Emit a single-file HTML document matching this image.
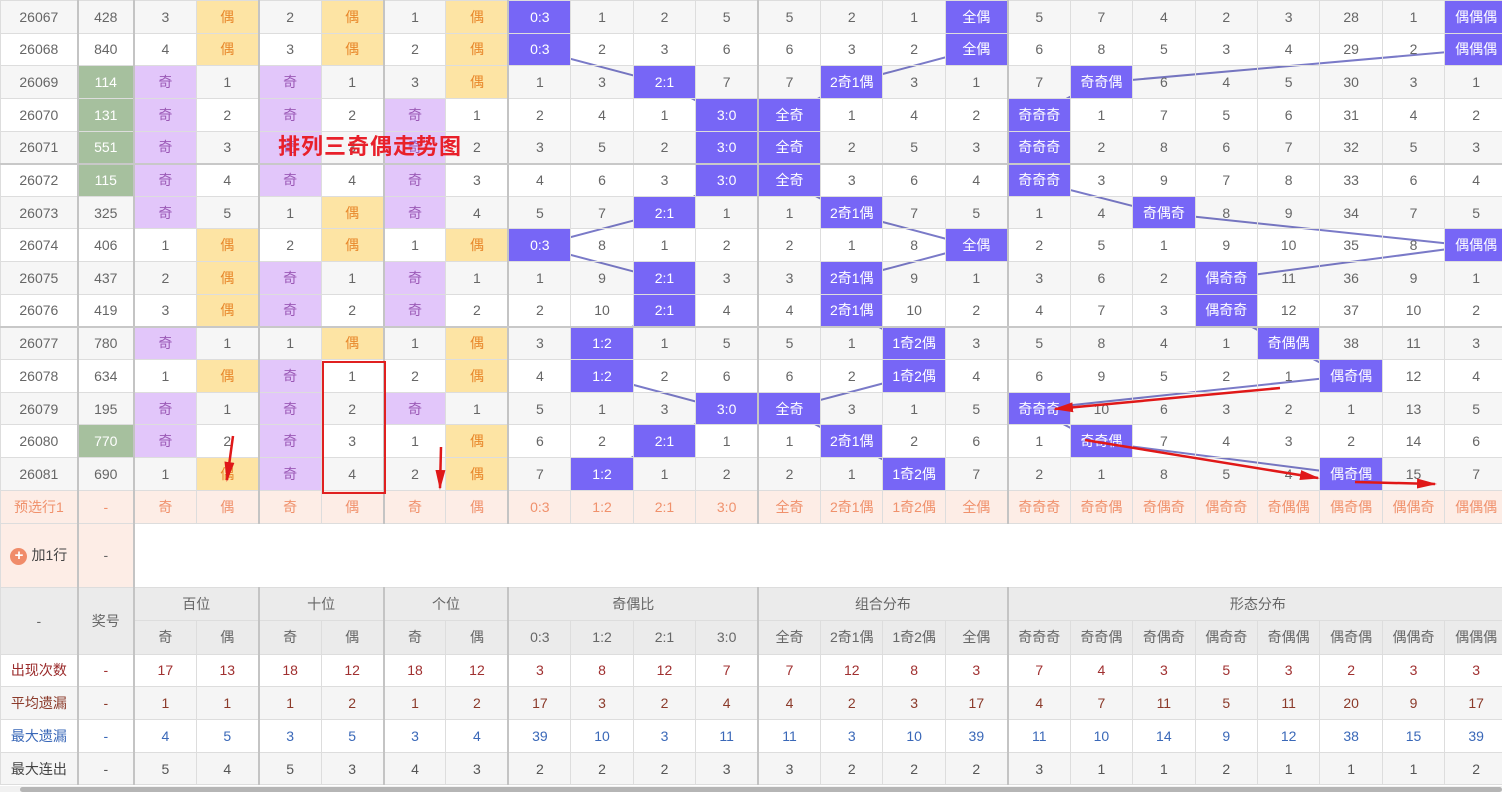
<!DOCTYPE html>
<html><head><meta charset="utf-8">
<style>
html,body{margin:0;padding:0;width:1502px;height:792px;overflow:hidden;background:#fff;}
body{position:relative;font-family:"Liberation Sans","Noto Sans CJK SC",sans-serif;font-size:14px;color:#666;}
svg.ln{position:absolute;left:0;top:0;z-index:0}
svg.ov{position:absolute;left:0;top:0;z-index:3}
table{position:absolute;left:0;top:0;z-index:1;border-collapse:collapse;table-layout:fixed;width:1508px;}
td{border:1px solid #ddd;text-align:center;padding:0;white-space:nowrap;overflow:hidden}
tr.d{height:32.65px}
tr.d:nth-child(odd){background:rgba(0,0,0,0.035)}
tr.d td:nth-child(2),tr.d td:nth-child(3),tr.d td:nth-child(5),tr.d td:nth-child(7),tr.d td:nth-child(9),tr.d td:nth-child(13),tr.d td:nth-child(17),
tr.s td:nth-child(2),tr.s td:nth-child(3),tr.s td:nth-child(5),tr.s td:nth-child(7),tr.s td:nth-child(9),tr.s td:nth-child(13),tr.s td:nth-child(17),
tr.p td:nth-child(2),tr.p td:nth-child(3),tr.p td:nth-child(5),tr.p td:nth-child(7),tr.p td:nth-child(9),tr.p td:nth-child(13),tr.p td:nth-child(17),
td.L{border-left:2px solid #c4c4c4}
tr.sep td{border-bottom:2px solid #c8c8c8}
td.q{background:#e2c6fa;color:#9b59b6}
td.o{background:#fde4a4;color:#e8872a}
td.g{background:#a6c09e;color:#fff}
td.b{background:#7766f6;color:#fff}
tr.p{height:33px;background:#fdede6}
tr.p td{color:#f0916c}
tr.a{height:64px}
tr.a td.pk{background:#fdede6}
tr.h{height:33.5px;background:#ebebeb}
tr.h td{color:#666}
tr.s{height:32.7px}
.r1 td{color:#a03030}.r2 td{color:#8b3a2a}.r3 td{color:#3a68b8}.r4 td{color:#555}
.r1 td:first-child{color:#9a2a2a}.r4 td:first-child{color:#444}
.plus{display:inline-block;width:17px;height:17px;border-radius:50%;background:#f08c6a;color:#fff;font-size:15px;line-height:16px;vertical-align:middle;margin-right:4px;font-weight:bold}
.title{position:absolute;left:278px;top:129px;z-index:2;color:#e8202a;font-weight:bold;font-size:22px;letter-spacing:1px}
.sb{position:absolute;left:0;top:786px;width:1502px;height:6px;background:#f1f1f1;z-index:4}
.sb div{position:absolute;left:20px;top:1px;width:1482px;height:5px;background:#b5b5b5;border-radius:3px}
</style></head><body>
<svg class="ln" width="1502" height="792"><g fill="none" stroke="#7a7ac8" stroke-width="2">
<polyline points="537,17 537,50 662,83 724,115 724,148 724,181 662,213 537,246 662,279 662,311 600,344 600,376 724,409 662,442 600,474"/>
<polyline points="973,17 973,50 849,83 786,115 786,148 786,181 849,213 973,246 849,279 849,311 911,344 911,376 786,409 849,442 911,474"/>
<polyline points="1471,17 1471,50 1097,83 1035,115 1035,148 1035,181 1160,213 1471,246 1222,279 1222,311 1284,344 1346,376 1035,409 1097,442 1346,474"/>
</g></svg>
<table>
<colgroup><col style="width:77px"><col style="width:56px"><col span="22" style="width:62.25px"></colgroup>
<tr class="d"><td>26067</td><td>428</td><td>3</td><td class="o">偶</td><td>2</td><td class="o">偶</td><td>1</td><td class="o">偶</td><td class="b">0:3</td><td>1</td><td>2</td><td>5</td><td>5</td><td>2</td><td>1</td><td class="b">全偶</td><td>5</td><td>7</td><td>4</td><td>2</td><td>3</td><td>28</td><td>1</td><td class="b">偶偶偶</td></tr>
<tr class="d"><td>26068</td><td>840</td><td>4</td><td class="o">偶</td><td>3</td><td class="o">偶</td><td>2</td><td class="o">偶</td><td class="b">0:3</td><td>2</td><td>3</td><td>6</td><td>6</td><td>3</td><td>2</td><td class="b">全偶</td><td>6</td><td>8</td><td>5</td><td>3</td><td>4</td><td>29</td><td>2</td><td class="b">偶偶偶</td></tr>
<tr class="d"><td>26069</td><td class="g">114</td><td class="q">奇</td><td>1</td><td class="q">奇</td><td>1</td><td>3</td><td class="o">偶</td><td>1</td><td>3</td><td class="b">2:1</td><td>7</td><td>7</td><td class="b">2奇1偶</td><td>3</td><td>1</td><td>7</td><td class="b">奇奇偶</td><td>6</td><td>4</td><td>5</td><td>30</td><td>3</td><td>1</td></tr>
<tr class="d"><td>26070</td><td class="g">131</td><td class="q">奇</td><td>2</td><td class="q">奇</td><td>2</td><td class="q">奇</td><td>1</td><td>2</td><td>4</td><td>1</td><td class="b">3:0</td><td class="b">全奇</td><td>1</td><td>4</td><td>2</td><td class="b">奇奇奇</td><td>1</td><td>7</td><td>5</td><td>6</td><td>31</td><td>4</td><td>2</td></tr>
<tr class="d sep"><td>26071</td><td class="g">551</td><td class="q">奇</td><td>3</td><td class="q">奇</td><td>3</td><td class="q">奇</td><td>2</td><td>3</td><td>5</td><td>2</td><td class="b">3:0</td><td class="b">全奇</td><td>2</td><td>5</td><td>3</td><td class="b">奇奇奇</td><td>2</td><td>8</td><td>6</td><td>7</td><td>32</td><td>5</td><td>3</td></tr>
<tr class="d"><td>26072</td><td class="g">115</td><td class="q">奇</td><td>4</td><td class="q">奇</td><td>4</td><td class="q">奇</td><td>3</td><td>4</td><td>6</td><td>3</td><td class="b">3:0</td><td class="b">全奇</td><td>3</td><td>6</td><td>4</td><td class="b">奇奇奇</td><td>3</td><td>9</td><td>7</td><td>8</td><td>33</td><td>6</td><td>4</td></tr>
<tr class="d"><td>26073</td><td>325</td><td class="q">奇</td><td>5</td><td>1</td><td class="o">偶</td><td class="q">奇</td><td>4</td><td>5</td><td>7</td><td class="b">2:1</td><td>1</td><td>1</td><td class="b">2奇1偶</td><td>7</td><td>5</td><td>1</td><td>4</td><td class="b">奇偶奇</td><td>8</td><td>9</td><td>34</td><td>7</td><td>5</td></tr>
<tr class="d"><td>26074</td><td>406</td><td>1</td><td class="o">偶</td><td>2</td><td class="o">偶</td><td>1</td><td class="o">偶</td><td class="b">0:3</td><td>8</td><td>1</td><td>2</td><td>2</td><td>1</td><td>8</td><td class="b">全偶</td><td>2</td><td>5</td><td>1</td><td>9</td><td>10</td><td>35</td><td>8</td><td class="b">偶偶偶</td></tr>
<tr class="d"><td>26075</td><td>437</td><td>2</td><td class="o">偶</td><td class="q">奇</td><td>1</td><td class="q">奇</td><td>1</td><td>1</td><td>9</td><td class="b">2:1</td><td>3</td><td>3</td><td class="b">2奇1偶</td><td>9</td><td>1</td><td>3</td><td>6</td><td>2</td><td class="b">偶奇奇</td><td>11</td><td>36</td><td>9</td><td>1</td></tr>
<tr class="d sep"><td>26076</td><td>419</td><td>3</td><td class="o">偶</td><td class="q">奇</td><td>2</td><td class="q">奇</td><td>2</td><td>2</td><td>10</td><td class="b">2:1</td><td>4</td><td>4</td><td class="b">2奇1偶</td><td>10</td><td>2</td><td>4</td><td>7</td><td>3</td><td class="b">偶奇奇</td><td>12</td><td>37</td><td>10</td><td>2</td></tr>
<tr class="d"><td>26077</td><td>780</td><td class="q">奇</td><td>1</td><td>1</td><td class="o">偶</td><td>1</td><td class="o">偶</td><td>3</td><td class="b">1:2</td><td>1</td><td>5</td><td>5</td><td>1</td><td class="b">1奇2偶</td><td>3</td><td>5</td><td>8</td><td>4</td><td>1</td><td class="b">奇偶偶</td><td>38</td><td>11</td><td>3</td></tr>
<tr class="d"><td>26078</td><td>634</td><td>1</td><td class="o">偶</td><td class="q">奇</td><td>1</td><td>2</td><td class="o">偶</td><td>4</td><td class="b">1:2</td><td>2</td><td>6</td><td>6</td><td>2</td><td class="b">1奇2偶</td><td>4</td><td>6</td><td>9</td><td>5</td><td>2</td><td>1</td><td class="b">偶奇偶</td><td>12</td><td>4</td></tr>
<tr class="d"><td>26079</td><td>195</td><td class="q">奇</td><td>1</td><td class="q">奇</td><td>2</td><td class="q">奇</td><td>1</td><td>5</td><td>1</td><td>3</td><td class="b">3:0</td><td class="b">全奇</td><td>3</td><td>1</td><td>5</td><td class="b">奇奇奇</td><td>10</td><td>6</td><td>3</td><td>2</td><td>1</td><td>13</td><td>5</td></tr>
<tr class="d"><td>26080</td><td class="g">770</td><td class="q">奇</td><td>2</td><td class="q">奇</td><td>3</td><td>1</td><td class="o">偶</td><td>6</td><td>2</td><td class="b">2:1</td><td>1</td><td>1</td><td class="b">2奇1偶</td><td>2</td><td>6</td><td>1</td><td class="b">奇奇偶</td><td>7</td><td>4</td><td>3</td><td>2</td><td>14</td><td>6</td></tr>
<tr class="d"><td>26081</td><td>690</td><td>1</td><td class="o">偶</td><td class="q">奇</td><td>4</td><td>2</td><td class="o">偶</td><td>7</td><td class="b">1:2</td><td>1</td><td>2</td><td>2</td><td>1</td><td class="b">1奇2偶</td><td>7</td><td>2</td><td>1</td><td>8</td><td>5</td><td>4</td><td class="b">偶奇偶</td><td>15</td><td>7</td></tr>
<tr class="p"><td>预选行1</td><td>-</td><td>奇</td><td>偶</td><td>奇</td><td>偶</td><td>奇</td><td>偶</td><td>0:3</td><td>1:2</td><td>2:1</td><td>3:0</td><td>全奇</td><td>2奇1偶</td><td>1奇2偶</td><td>全偶</td><td>奇奇奇</td><td>奇奇偶</td><td>奇偶奇</td><td>偶奇奇</td><td>奇偶偶</td><td>偶奇偶</td><td>偶偶奇</td><td>偶偶偶</td></tr>
<tr class="a"><td class="pk" style="color:#444"><span class="plus">+</span>加1行</td><td class="pk L">-</td><td colspan="22" class="L"></td></tr>
<tr class="h"><td rowspan="2">-</td><td rowspan="2" class="L">奖号</td><td colspan="2" class="L">百位</td><td colspan="2" class="L">十位</td><td colspan="2" class="L">个位</td><td colspan="4" class="L">奇偶比</td><td colspan="4" class="L">组合分布</td><td colspan="8" class="L">形态分布</td></tr>
<tr class="h"><td class="L">奇</td><td>偶</td><td class="L">奇</td><td>偶</td><td class="L">奇</td><td>偶</td><td class="L">0:3</td><td>1:2</td><td>2:1</td><td>3:0</td><td class="L">全奇</td><td>2奇1偶</td><td>1奇2偶</td><td>全偶</td><td class="L">奇奇奇</td><td>奇奇偶</td><td>奇偶奇</td><td>偶奇奇</td><td>奇偶偶</td><td>偶奇偶</td><td>偶偶奇</td><td>偶偶偶</td></tr>
<tr class="s r1" style="background:#fff"><td>出现次数</td><td>-</td><td>17</td><td>13</td><td>18</td><td>12</td><td>18</td><td>12</td><td>3</td><td>8</td><td>12</td><td>7</td><td>7</td><td>12</td><td>8</td><td>3</td><td>7</td><td>4</td><td>3</td><td>5</td><td>3</td><td>2</td><td>3</td><td>3</td></tr>
<tr class="s r2" style="background:#f5f5f5"><td>平均遗漏</td><td>-</td><td>1</td><td>1</td><td>1</td><td>2</td><td>1</td><td>2</td><td>17</td><td>3</td><td>2</td><td>4</td><td>4</td><td>2</td><td>3</td><td>17</td><td>4</td><td>7</td><td>11</td><td>5</td><td>11</td><td>20</td><td>9</td><td>17</td></tr>
<tr class="s r3" style="background:#fff"><td>最大遗漏</td><td>-</td><td>4</td><td>5</td><td>3</td><td>5</td><td>3</td><td>4</td><td>39</td><td>10</td><td>3</td><td>11</td><td>11</td><td>3</td><td>10</td><td>39</td><td>11</td><td>10</td><td>14</td><td>9</td><td>12</td><td>38</td><td>15</td><td>39</td></tr>
<tr class="s r4" style="background:#f5f5f5"><td>最大连出</td><td>-</td><td>5</td><td>4</td><td>5</td><td>3</td><td>4</td><td>3</td><td>2</td><td>2</td><td>2</td><td>3</td><td>3</td><td>2</td><td>2</td><td>2</td><td>3</td><td>1</td><td>1</td><td>2</td><td>1</td><td>1</td><td>1</td><td>2</td></tr>
</table>
<div class="title">排列三奇偶走势图</div>
<svg class="ov" width="1502" height="792">
<defs><marker id="ah2" markerWidth="20" markerHeight="10" refX="18" refY="5" orient="auto" markerUnits="userSpaceOnUse"><path d="M0,0 L20,5 L0,10 Z" fill="#e01818"/></marker></defs>
<rect x="323" y="362" width="62" height="131" fill="none" stroke="#e02020" stroke-width="2"/>
<g stroke="#e01818" stroke-width="2.5" fill="none">
<line x1="233" y1="436" x2="227" y2="480" marker-end="url(#ah2)"/>
<line x1="441" y1="447" x2="440" y2="488" marker-end="url(#ah2)"/>
<line x1="1280" y1="388" x2="1055" y2="409" marker-end="url(#ah2)"/>
<line x1="1085" y1="440" x2="1318" y2="478" marker-end="url(#ah2)"/>
<line x1="1355" y1="482" x2="1435" y2="484" marker-end="url(#ah2)"/>
</g></svg>
<div class="sb"><div></div></div>
</body></html>
